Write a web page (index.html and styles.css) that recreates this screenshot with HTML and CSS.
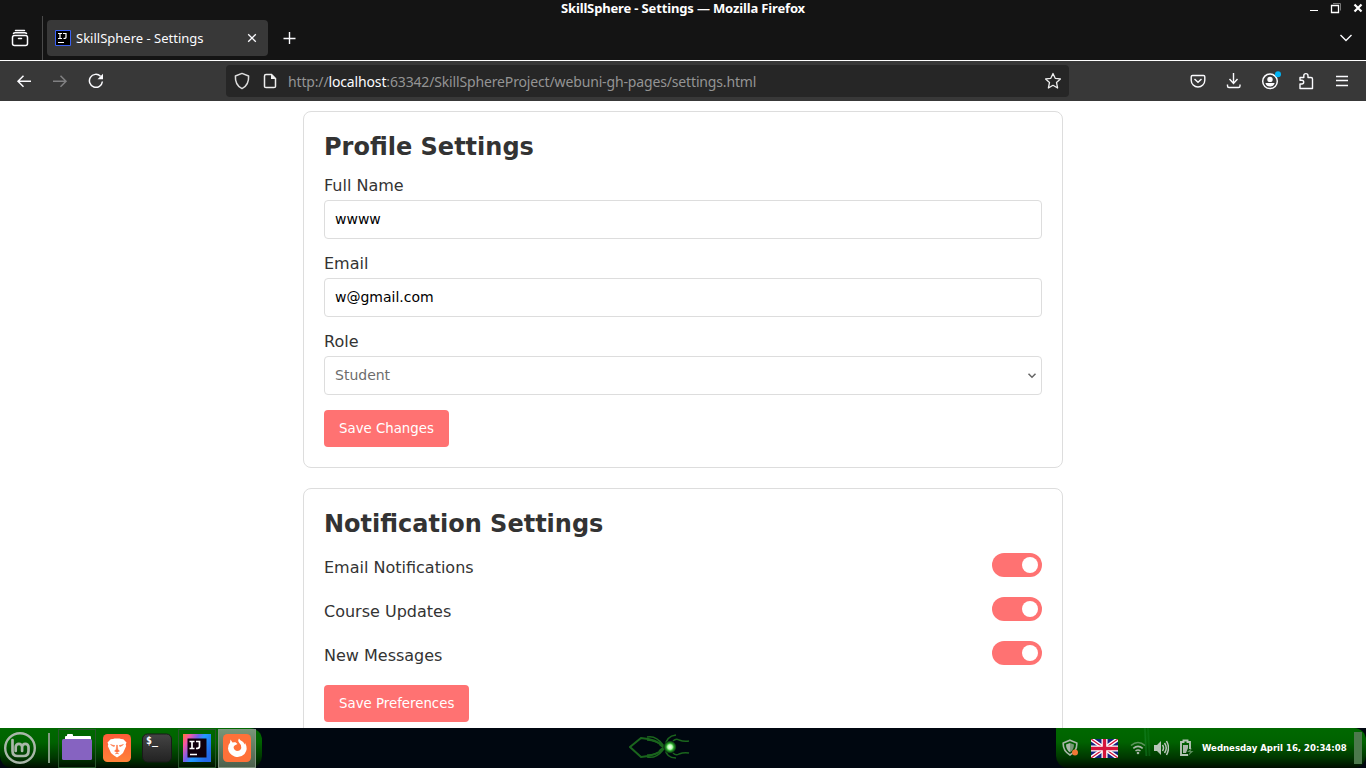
FILE: index.html
```html
<!DOCTYPE html>
<html lang="en">
<head>
<meta charset="utf-8">
<title>SkillSphere - Settings</title>
<link rel="stylesheet" href="styles.css">
</head>
<body>
<div class="desktop">
  <header class="titlebar">
    <span class="window-title">SkillSphere - Settings — Mozilla Firefox</span>
    <svg class="window-controls" width="60" height="16" viewBox="0 0 60 16" fill="none" stroke="#fff">
      <path d="M4 10.500h8"/><path d="M27 3.500h7.500v7" stroke="#777"/><path d="M25.500 5.500h7v7h-7z" stroke-width="1.300"/><path d="m48.500 4.500 7 7m0-7-7 7" stroke-width="2.200"/>
    </svg>
  </header>
  <div class="tabstrip">
    <div class="recent"><svg width="18" height="18" viewBox="0 0 18 18" fill="none" stroke="#fbfbfe" stroke-width="1.500" stroke-linecap="round"><path d="M4.500 1.500h9M2.500 4.500Q3 3.800 4 3.800h10q1 0 1.500.7"/><rect x="1.500" y="6.500" width="15" height="10" rx="2"/><path d="M7.500 9.500h3"/></svg></div>
    <div class="tab">
      <svg width="16" height="16" viewBox="0 0 16 16"><path d="M.5.5h15v15H.5z" fill="#000" stroke="#3b62f6"/><path d="M3 3.500h4M5 3.500v5M3 8.500h4M8 3.500h3v4q0 1-2.500 1M3 12.500h6" fill="none" stroke="#fff" stroke-width="1.200"/></svg>
      <span class="tab-title">SkillSphere - Settings</span>
      <svg class="tab-close" width="10" height="10" viewBox="0 0 10 10" stroke="#fbfbfe" stroke-width="1.300"><path d="m1.200 1.200 7.600 7.600m0-7.600L1.200 8.800"/></svg>
    </div>
    <svg class="new-tab" width="14" height="14" viewBox="0 0 14 14" stroke="#fbfbfe" stroke-width="1.400"><path d="M6.500 1v12M.5 7.500h12"/></svg>
    <svg class="all-tabs" width="14" height="10" viewBox="0 0 14 10" fill="none" stroke="#fbfbfe" stroke-width="1.400"><path d="m1.500 2 5.500 5.500L12.500 2"/></svg>
  </div>
  <nav class="toolbar">
    <div class="nav-buttons">
      <span class="tool"><svg width="16" height="16" viewBox="0 0 16 16" fill="none" stroke="#fbfbfe" stroke-width="1.500"><path d="M15 8.300H2m5.500-5.500L2 8.300l5.500 5.500"/></svg></span>
      <span class="tool"><svg width="16" height="16" viewBox="0 0 16 16" fill="none" stroke="#808082" stroke-width="1.500"><path d="M1 8.300h13M8.500 2.800 14 8.300l-5.500 5.500"/></svg></span>
      <span class="tool"><svg width="16" height="16" viewBox="0 0 16 16"><path d="M12.500 3.200A6.500 6.500 0 1 0 14.400 8.500" fill="none" stroke="#fbfbfe" stroke-width="1.500"/><path d="M15 .7v5.500H9.500z" fill="#fbfbfe"/></svg></span>
    </div>
    <div class="urlbar">
      <svg width="16" height="18" viewBox="0 0 16 18" fill="none" stroke="#ddd" stroke-width="1.500"><path d="M8 1.400 14.600 4c.3 5.500-1.500 10.200-6.600 12.600C2.900 14.200 1.100 9.500 1.400 4z" stroke-linejoin="round"/></svg>
      <svg class="site-page" width="14" height="16" viewBox="0 0 14 16"><path d="M8.500 1.500H3q-1.500 0-1.500 1.500v10.500q0 1 1.500 1h8q1.500 0 1.500-1V5.500z" fill="none" stroke="#eee" stroke-width="1.500"/><path d="M8 1v5h5z" fill="#eee"/></svg>
      <span class="url">http://<b>localhost</b>:63342/SkillSphereProject/webuni-gh-pages/settings.html</span>
      <svg class="star" width="18" height="18" viewBox="0 0 18 18" fill="none" stroke="#eee" stroke-width="1.300" stroke-linejoin="round"><path d="m9 1.500 2.200 4.800 5.200.6-3.900 3.500 1.100 5.600L9 13.300 4.400 16l1.100-5.600-3.900-3.500 5.200-.6z"/></svg>
    </div>
    <div class="tools">
      <span class="tool"><svg width="16" height="16" viewBox="0 0 16 16" fill="none" stroke="#fbfbfe" stroke-width="1.400"><path d="M2.500 2.500h11q1.300 0 1.300 1.300v3.400a6.800 6.800 0 0 1-13.600 0V3.800q0-1.300 1.300-1.300z"/><path d="m4.500 6 3.500 3.300L11.500 6"/></svg></span>
      <span class="tool"><svg width="16" height="18" viewBox="0 0 16 18" fill="none" stroke="#fbfbfe" stroke-width="1.400"><path d="M7.500 1v10.500M3.500 7l4 4.500 4-4.500M1.500 12.500v1.500q0 1.500 1.500 1.500h9.500q1.500 0 1.500-1.500v-1.500"/></svg></span>
      <span class="tool"><svg width="22" height="22" viewBox="0 0 22 22"><circle cx="11" cy="11.300" r="7.300" fill="none" stroke="#fbfbfe" stroke-width="1.500"/><circle cx="11" cy="9.400" r="2.700" fill="#fbfbfe"/><path d="M6.300 13h9.400q-1.200 3.500-4.700 3.500T6.300 13z" fill="#fbfbfe"/><circle cx="19" cy="4.200" r="3" fill="#00b3f4"/></svg></span>
      <span class="tool"><svg width="16" height="18" viewBox="0 0 16 18" fill="none" stroke="#fbfbfe" stroke-width="1.400" stroke-linejoin="round"><path d="M2 16.500V12h1.800a1.900 1.900 0 0 0 0-3.800H2V5.500h3.800V3.700a2.100 2.100 0 0 1 4.200 0v1.800h3q1.500 0 1.500 1.500v9.500z"/></svg></span>
      <span class="tool"><svg width="14" height="12" viewBox="0 0 14 12" stroke="#fbfbfe" stroke-width="1.300"><path d="M1 1.500h12M1 5.500h12M1 10.500h12"/></svg></span>
    </div>
  </nav>
  <main class="page">
    <section class="card">
      <h2>Profile Settings</h2>
      <label class="field-label">Full Name</label>
      <div class="control">wwww</div>
      <label class="field-label">Email</label>
      <div class="control">w@gmail.com</div>
      <label class="field-label">Role</label>
      <div class="control select">Student<svg width="10" height="8" viewBox="0 0 10 8" fill="none" stroke="#666" stroke-width="1.500"><path d="m1.500 1.800 3.500 3.500 3.500-3.500"/></svg></div>
      <button class="btn">Save Changes</button>
    </section>
    <section class="card">
      <h2>Notification Settings</h2>
      <div class="setting"><span>Email Notifications</span><i class="switch"></i></div>
      <div class="setting"><span>Course Updates</span><i class="switch"></i></div>
      <div class="setting"><span>New Messages</span><i class="switch"></i></div>
      <button class="btn">Save Preferences</button>
    </section>
  </main>
  <footer class="taskbar">
    <div class="launchers">
      <svg class="mint" width="34" height="34" viewBox="0 0 34 34" fill="none" stroke="#a9b7a9" stroke-linecap="round"><circle cx="17" cy="17" r="14.800" stroke-width="2.400"/><path d="M9.500 9v11q0 5 5 5h6q5 0 5-5v-4a3.200 3.200 0 0 0-6.400 0v4m0-4a3.200 3.200 0 0 0-6.400 0v4" stroke-width="2.700"/></svg>
      <i class="divider"></i>
      <span class="app open"><svg width="32" height="30" viewBox="0 0 32 30"><path d="M4 8V4q0-1 1-1h1V2q0-1 1-1h4q1 0 1 1v1h17q1 0 1 1v4z" fill="#fff"/><rect x="1" y="6" width="30" height="21" rx="1.500" fill="#8663c1"/></svg></span>
      <span class="app"><svg width="30" height="30" viewBox="0 0 30 30"><defs><linearGradient id="lion" x2="0" y2="1"><stop stop-color="#ff5b38"/><stop offset="1" stop-color="#ff8238"/></linearGradient></defs><rect x="1" y="1" width="28" height="28" rx="4.500" fill="url(#lion)"/><path d="m11 6 1.500-.5h5L19 6l2.300.3 3.200 3.200-.8 2 .5 1.500-3.200 7-2.300 2-3.700 2.500-3.700-2.500-2.300-2-3.200-7 .5-1.500-.8-2 3.200-3.200z" fill="#fff"/><path d="m8.500 11.500 4.500 1.300-1.500.7zM21.500 11.500 17 12.800l1.500.7zM14.700 12h.6l.5 4.500L17.500 18 15 19.500 12.500 18l1.700-1.500zM13 21l2-1 2 1" fill="#ff7340" stroke="#ff7340" stroke-width=".5"/></svg></span>
      <span class="app"><svg width="30" height="30" viewBox="0 0 30 30"><defs><linearGradient id="term" x2="0" y2="1"><stop stop-color="#444"/><stop offset="1" stop-color="#222"/></linearGradient></defs><rect x=".5" y="1" width="29" height="28" rx="5" fill="url(#term)" stroke="#191919"/><text x="4" y="11" class="term-text">$_</text></svg></span>
      <span class="app open"><svg width="28" height="28" viewBox="0 0 28 28"><defs><linearGradient id="ij" x2="1" y2=".55"><stop stop-color="#ff7a30"/><stop offset=".2" stop-color="#f956a2"/><stop offset=".45" stop-color="#7060ec"/><stop offset=".62" stop-color="#209cff"/><stop offset="1" stop-color="#2368e8"/></linearGradient></defs><path d="M0 0h28v28H0z" fill="url(#ij)"/><path d="M4.500 4.500h19v19h-19z" fill="#10000c"/><path d="M6.500 7.500h5M9 7.500v7M6.500 14.500h5M13 7.500h3.500v5q0 2-3.500 2M7 20.500h7" fill="none" stroke="#fff" stroke-width="1.700"/></svg></span>
      <span class="app active"><svg width="30" height="30" viewBox="0 0 30 30"><rect x="1" y="1" width="28" height="28" rx="4.500" fill="#ff7139"/><path d="M8.500 6.500 10.500 9.500q1.500-.6 3-.2l2 1.700-2.500 1.300q-1.500.7-1.400 2.200.4 3 3.400 3.400 3.500 0 4.300-3 .5-3-2-5-2-2-.3-4.400 1 2 3.500 3 1.500 1 2 3l.6-1.500q3.400 6-.6 11-4.500 4.500-10 2.500Q6.500 21 6 15.500q-.2-3.500 2-5.700z" fill="#fff"/></svg></span>
    </div>
    <svg class="emblem" width="62" height="30" viewBox="0 0 62 30" fill="none" stroke="#1a651d" stroke-width="1.500"><defs><radialGradient id="glow"><stop stop-color="#fff"/><stop offset=".35" stop-color="#b7ffb0"/><stop offset=".6" stop-color="#27a329"/><stop offset="1" stop-color="#03150c"/></radialGradient></defs><path d="M36 14Q27 6 12 5L1 14l11 10q15-1 24-9" stroke-width="2"/><path d="M35 14Q27 7 18 7M35 15q-8 8-17 7M34 12Q27 2 18 4M34 17q-7 9-16 7M36 14q1-11 11-12M36 15q1 10 11 10M44 8q3-3 6-1 5 2 10 1M44 20q3 3 6 1 5-2 10-1M30 11l9 8M30 18l9-8"/><circle cx="41" cy="14" r="6.500" fill="url(#glow)" stroke="none"/></svg>
    <div class="tray">
      <svg class="tray-shield" width="18" height="18" viewBox="0 0 18 18"><path d="M8 1.200 14.800 4q.5 8-6.800 12Q.8 12 1.200 4z" fill="none" stroke="#a9b7a9" stroke-width="1.600"/><path d="M8 4 4 5.500q0 5 4 8z" fill="#a9b7a9"/><path d="m8 4 4 1.500q0 5-4 8z" fill="#789778"/><circle cx="13" cy="13.500" r="3" fill="#f27835"/></svg>
      <svg class="flag" width="27" height="19" viewBox="0 0 27 19"><path d="M0 0h27v19H0z" fill="#15227d"/><path d="m0 0 27 19M27 0 0 19" stroke="#fff" stroke-width="4"/><path d="m0 0 27 19M27 0 0 19" stroke="#d4143a" stroke-width="1.300"/><path d="M13.500 0v19M0 9.500h27" stroke="#fff" stroke-width="6"/><path d="M13.500 0v19M0 9.500h27" stroke="#d4143a" stroke-width="3.400"/></svg>
      <svg class="wifi" width="16" height="14" viewBox="0 0 16 14" fill="none" stroke="#a9b7a9" stroke-width="1.600"><path d="M1 4.500q7-6 14 0" stroke="#5b945b"/><path d="M3.300 7.300q4.700-4 9.400 0M5.500 10q2.500-2 5 0"/><circle cx="8" cy="12" r="1.300" fill="#a9b7a9" stroke="none"/></svg>
      <svg class="volume" width="16" height="16" viewBox="0 0 16 16" fill="none" stroke="#b8c5b8" stroke-width="1.500"><path d="M1 5h3l4-4v14l-4-4H1z" fill="#b8c5b8" stroke="none"/><path d="M9.500 5q2 3 0 6M11.500 3q3.500 5 0 10M13.500 1q4 7 0 14"/></svg>
      <svg class="battery" width="15" height="18" viewBox="0 0 15 18"><path d="M9 16H2V3h2.500V1.500h4V3H11v7" fill="none" stroke="#b3c3b3" stroke-width="1.900"/><path d="M4 6h5v3l-2 5H4z" fill="#a9b7a9"/><path d="m13 9-5 4h3l-2 4 5.500-5h-3z" fill="#5d8d5d"/></svg>
      <span class="clock">Wednesday April 16, 20:34:08</span>
      <i class="show-desktop"></i>
    </div>
  </footer>
</div>
</body>
</html>
```
FILE: styles.css
```css
* { box-sizing: border-box; }
body { margin: 0; overflow: hidden; font-family: "DejaVu Sans", sans-serif; }
svg { display: block; flex: none; }
.desktop { width: 1366px; height: 768px; display: flex; flex-direction: column; background: #fff; overflow: hidden; }

.titlebar { height: 16px; flex: none; display: grid; grid-template-columns: 60px 1fr 60px; background: #141414; }
.window-title { grid-column: 2; text-align: center; color: #fff; font: bold 13px/17px "Noto Sans", sans-serif; letter-spacing: -.15px; white-space: nowrap; }
.window-controls { grid-column: 3; }
.tabstrip { height: 45px; flex: none; display: flex; align-items: center; background: #141414; border-bottom: 1px solid #fff; }
.recent { width: 43px; height: 44px; padding: 13px 0 0 11px; border-right: 1px solid #4a4a4a; }
.tab { width: 221px; height: 36px; margin-left: 4px; padding: 0 11px 0 8px; display: flex; align-items: center; background: #383838; border-radius: 4px; color: #fbfbfe; }
.tab-title { margin-left: 5px; font: 13px/18px "Noto Sans", sans-serif; white-space: nowrap; }
.tab-close { margin-left: auto; }
.new-tab { margin-left: 15px; }
.all-tabs { margin-left: auto; margin-right: 13px; }

.toolbar { height: 40px; flex: none; display: flex; align-items: center; background: #383838; }
.nav-buttons { display: flex; width: 226px; padding-left: 6px; }
.tool { width: 36px; height: 32px; display: grid; place-items: center; }
.urlbar { width: 843px; height: 32px; display: flex; align-items: center; padding: 0 7px 0 8px; background: #262626; border-radius: 4px; }
.site-page { margin-left: 13px; }
.url { margin-left: 11px; padding-top: 2px; color: #949494; font: 14px/20px "Noto Sans", sans-serif; letter-spacing: -.15px; white-space: nowrap; }
.url b { color: #fbfbfe; font-weight: 400; }
.star { margin-left: auto; }
.tools { display: flex; margin-left: auto; margin-right: 6px; }

.page { height: 627px; flex: none; padding-top: 10px; display: flex; flex-direction: column; align-items: center; gap: 20px; overflow: hidden; color: #333; }
.card { width: 760px; flex: none; padding: 20px; border: 1px solid #ddd; border-radius: 8px; }
h2 { margin: 0 0 13px; font-size: 24px; line-height: 31px; }
.field-label { display: block; margin-bottom: 5px; font-size: 16px; line-height: 19px; }
.control { height: 39px; margin-bottom: 15px; padding: 0 10px; border: 1px solid #ddd; border-radius: 4px; color: #000; font-size: 14px; line-height: 37px; }
.select { display: flex; align-items: center; justify-content: space-between; padding-right: 4px; color: #6d6d6d; }
.btn { display: block; height: 37px; padding: 0 15px; border: 0; border-radius: 4px; background: #ff7272; color: #fff; font: 13.333px/37px "DejaVu Sans", sans-serif; }
.setting { height: 24px; margin-bottom: 20px; display: flex; justify-content: space-between; font-size: 16px; line-height: 30px; }
.switch { width: 50px; height: 24px; padding: 4px; display: flex; justify-content: flex-end; background: #ff7272; border-radius: 12px; }
.switch::after { content: ""; width: 16px; height: 16px; border-radius: 50%; background: #fff; }

.taskbar { height: 40px; flex: none; display: flex; align-items: center; background: #000710; }
.launchers { width: 262px; height: 40px; display: flex; align-items: center; padding-left: 3px; background: linear-gradient(#006800 0%, #006200 35%, #003600 75%, #000d00 100%); border-radius: 0 12px 12px 12px; }
.divider { width: 2px; height: 30px; margin: 0 8px 0 11px; background: #829b82; }
.app { width: 38px; height: 39px; margin-right: 2px; display: grid; place-items: center; }
.open { border: 1px solid #28552b; }
.active { background: linear-gradient(#779577, #4c604c); border: 1px solid #819481; margin-right: 0; }
.term-text { fill: #fff; font: bold 10px "DejaVu Sans Mono", monospace; }
.emblem { margin-left: 367px; }
.tray { width: 310px; height: 40px; margin-left: auto; padding: 0 4px 0 6px; display: flex; align-items: center; background: linear-gradient(87deg, transparent 28.500%, #18852b99 29%, transparent 29.500%, #18852b66 30%, transparent 30.500%) 0 0 / 100% 28px no-repeat, linear-gradient(#006800 0%, #006200 35%, #003600 75%, #000d00 100%); border-radius: 0 12px 12px 12px; }
.flag { margin-left: 11px; }
.wifi { margin-left: 12px; }
.volume { margin-left: 7px; }
.battery { margin-left: 10px; }
.clock { margin-left: 8px; color: #fff; font: bold 8.550px/16px "DejaVu Sans", sans-serif; white-space: nowrap; }
.show-desktop { width: 8px; height: 32px; margin-left: auto; background: #4c794c; }
```
